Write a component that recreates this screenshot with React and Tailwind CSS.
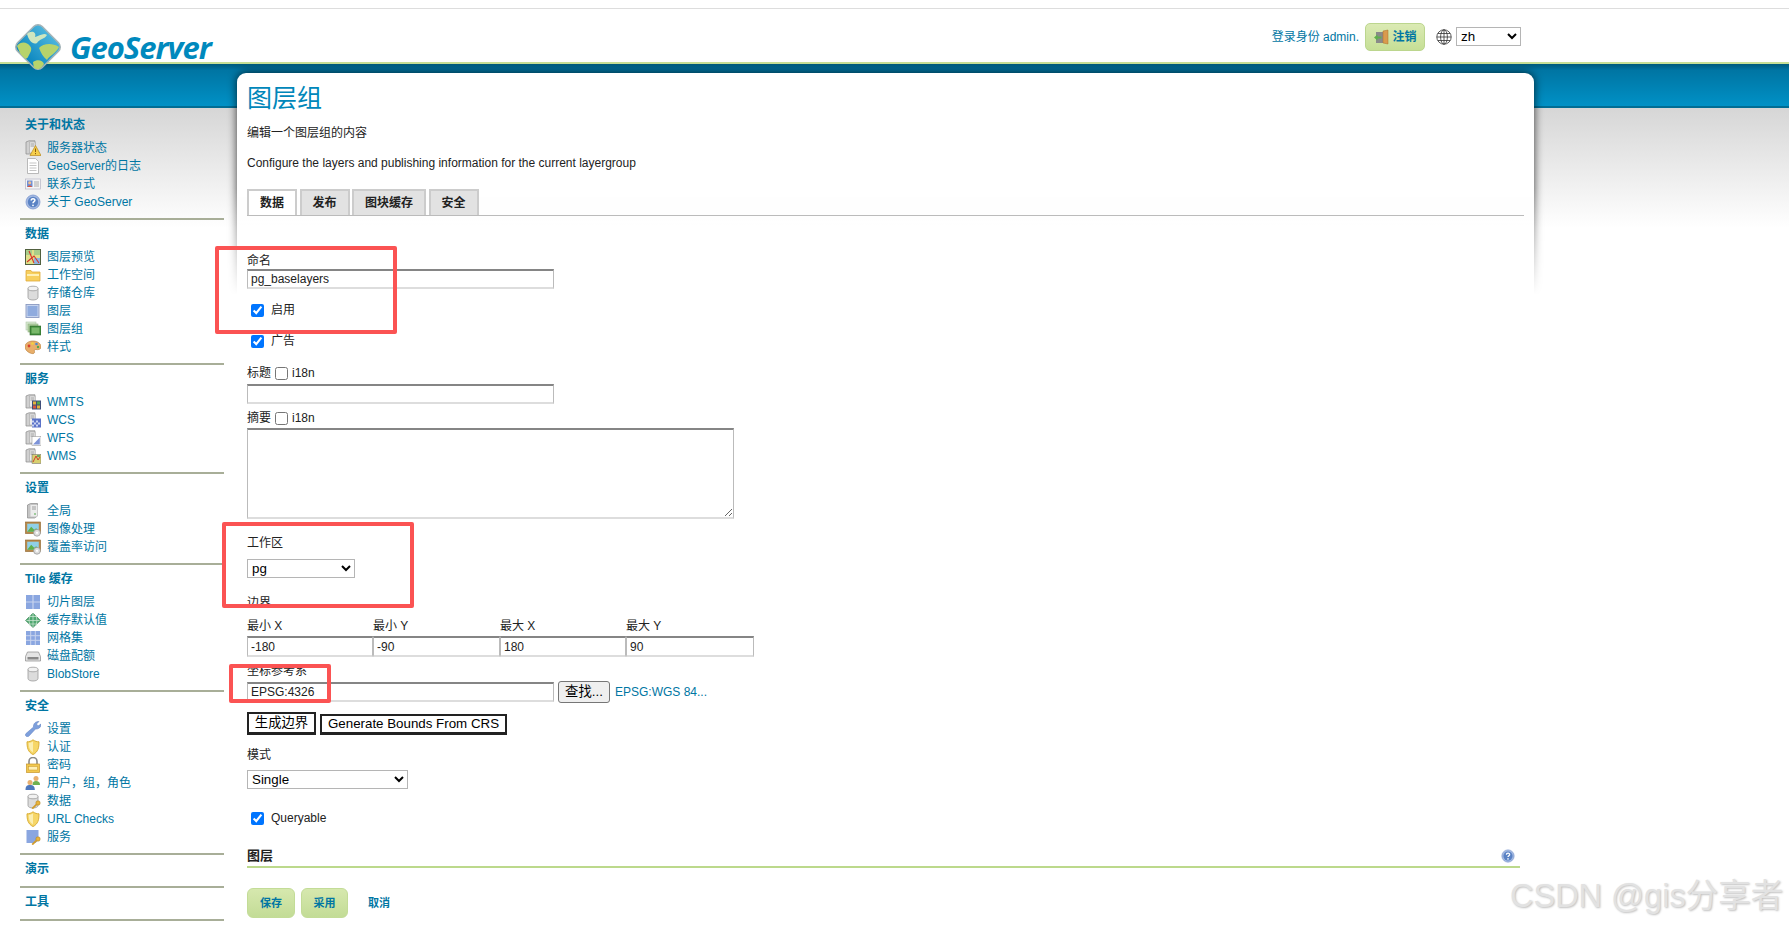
import React from 'react';

function Cyl() {
  return (
    <>
      <path d="M3 3.500v9c0 1.500 2.200 2.500 5 2.500s5-1 5-2.500v-9z" fill="#dcdcdc" stroke="#9a9a9a" strokeWidth=".8" />
      <ellipse cx="8" cy="3.500" rx="5" ry="2.300" fill="#f2f2f2" stroke="#9a9a9a" strokeWidth=".8" />
    </>
  );
}

function Server() {
  return (
    <>
      <path d="M1 2l3-1.200h6v11.200l-3 2H1z" fill="#d0d0d0" stroke="#8a8a8a" strokeWidth=".7" />
      <path d="M4.500 2h5.500v11h-5.500z" fill="#ececec" stroke="#9a9a9a" strokeWidth=".5" />
      <path d="M5.500 4h3.500M5.500 6h3.500" stroke="#888" strokeWidth=".8" />
    </>
  );
}

function Key() {
  return (
    <g>
      <circle cx="13" cy="10" r="2.200" fill="#e9b43c" stroke="#a87a18" strokeWidth=".5" />
      <path d="M11.800 11.200l-4.600 4.400" stroke="#d19c2c" strokeWidth="1.800" />
    </g>
  );
}

function Picture() {
  return (
    <>
      <rect x=".5" y="1" width="15" height="11.500" fill="#b8894a" stroke="#8a6228" strokeWidth=".6" />
      <rect x="2.200" y="2.700" width="11.600" height="8" fill="#8fd0e8" />
      <path d="M2.200 10.700l4-5 3 3 2-1.400 2.600 3.400z" fill="#5fb04c" />
      <circle cx="12" cy="11.800" r="3.400" fill="#dedede" stroke="#999" strokeWidth=".8" />
      <circle cx="12" cy="11.800" r="1.100" fill="#fff" />
    </>
  );
}

const shield = (
  <>
    <path d="M8 .8c2 1.500 4 2 6 2 0 6-.8 10-6 12.800C2.800 12.800 2 8.800 2 2.800c2 0 4-.5 6-2z" fill="#f6d667" stroke="#d6a92d" strokeWidth=".9" />
    <path d="M8 2.500v11c-3.500-2.200-4.200-5.500-4.300-9.500 1.600-.1 3-.6 4.300-1.500z" fill="#fbeeb0" />
  </>
);

const help = (
  <>
    <circle cx="8" cy="8" r="7" fill="#a3b9e2" stroke="#7d98cf" strokeWidth=".8" />
    <circle cx="8" cy="8" r="5.200" fill="#5a82c4" />
    <path d="M6.200 6.500c0-2.300 3.700-2.300 3.700-.2 0 1.500-1.900 1.300-1.900 2.900" fill="none" stroke="#fff" strokeWidth="1.500" />
    <circle cx="8" cy="11.300" r=".9" fill="#fff" />
  </>
);

const icons = {
  status: (
    <>
      <Server />
      <path d="M10.500 5.500L16 15.500H5z" fill="#f6cf4b" stroke="#b98a1c" strokeWidth=".7" />
      <path d="M10.500 8.500v3.500M10.500 13v1.200" stroke="#8a5a10" strokeWidth="1" />
    </>
  ),
  log: (
    <>
      <path d="M2.500.5h8l3 3v12h-11z" fill="#fff" stroke="#aaa" strokeWidth=".8" />
      <path d="M4.500 5h7M4.500 7.500h7M4.500 10h7M4.500 12.500h7" stroke="#b5b5b5" strokeWidth=".8" />
    </>
  ),
  contact: (
    <>
      <rect x=".5" y="3" width="15" height="10" fill="#f4f4f4" stroke="#b5b5c5" strokeWidth=".7" />
      <rect x="2" y="4.500" width="5.500" height="6.500" fill="#6f8fd6" />
      <circle cx="4.700" cy="6.800" r="1.500" fill="#f0c090" />
      <path d="M2.500 11c.3-2 4-2 4.500 0z" fill="#d9553c" />
      <path d="M9 6h5M9 8h5M9 10h5" stroke="#9a9a9a" strokeWidth=".8" />
    </>
  ),
  help,
  preview: (
    <>
      <rect x=".5" y=".5" width="15" height="15" fill="#dfe08a" stroke="#51603f" />
      <path d="M1 1h6v5H1zM9 1h6v5H9z" fill="#a9cd8a" />
      <path d="M9 9h6v6H9z" fill="#8eb4e0" />
      <path d="M4 2l5 12M2 13l7-6 5 7" fill="none" stroke="#d8352a" strokeWidth="1.100" />
    </>
  ),
  folder: (
    <>
      <path d="M1 3.500h5l1 1.500h8v9H1z" fill="#f7cf5e" stroke="#dfa93a" strokeWidth=".8" />
      <path d="M2 7h12v2H2z" fill="#fff0b5" />
    </>
  ),
  cyl: <Cyl />,
  layer: (
    <>
      <rect x="1" y="1.500" width="13" height="13" fill="#c6d4ee" stroke="#8a9ac0" strokeWidth=".9" />
      <rect x="2.500" y="3" width="10" height="10" fill="#8fabde" />
    </>
  ),
  group: (
    <>
      <rect x="1" y="1" width="10" height="8" fill="#d8e8d0" stroke="#b0c8a8" strokeWidth=".6" />
      <rect x="3" y="3" width="10" height="8" fill="#b0d0a0" stroke="#90b080" strokeWidth=".6" />
      <rect x="5" y="5" width="11" height="9" fill="#3f8a3a" stroke="#2f6a2c" strokeWidth=".6" />
      <rect x="6.500" y="6.500" width="8" height="6" fill="#79b86a" />
    </>
  ),
  style: (
    <>
      <path d="M8 2c4.500 0 8 2.500 8 6 0 2.500-3 3-5 2.500-1.500-.3-2 .8-1.500 2 .5 1.600-1 2.500-3 2C3 13.500 0 11 0 7.500 0 4.500 3.500 2 8 2z" fill="#e8ae6a" stroke="#b57b35" strokeWidth=".6" />
      <circle cx="4" cy="7" r="1.400" fill="#d8402e" />
      <circle cx="7.500" cy="4.500" r="1.300" fill="#f2d33c" />
      <circle cx="11.500" cy="5" r="1.300" fill="#4f8ad0" />
      <circle cx="13" cy="8" r="1.200" fill="#4fa84a" />
    </>
  ),
  wmts: (
    <>
      <Server />
      <rect x="7" y="6.500" width="9" height="9" fill="#3f4f7a" />
      <path d="M8 7.500h3v3H8z" fill="#e2b23c" />
      <path d="M12 7.500h3v3h-3z" fill="#4fa84a" />
      <path d="M8 11.500h3v3H8z" fill="#d8553c" />
      <path d="M12 11.500h3v3h-3z" fill="#e2b23c" />
    </>
  ),
  wcs: (
    <>
      <Server />
      <rect x="7" y="6.500" width="9" height="9" fill="#5b72c8" />
      <path d="M7 8.500h2v2H7zM11 8.500h2v2h-2zM9 10.500h2v2H9zM13 10.500h2v2h-2zM7 12.500h2v2H7zM11 12.500h2v2h-2z" fill="#c9d4f2" />
    </>
  ),
  wfs: (
    <>
      <Server />
      <rect x="7" y="6.500" width="9" height="9" fill="#fff" stroke="#888" strokeWidth=".5" />
      <path d="M14.800 7.500v7H8z" fill="#7d93d8" />
    </>
  ),
  wms: (
    <>
      <Server />
      <rect x="7" y="6.500" width="9" height="9" fill="#d8d070" stroke="#666" strokeWidth=".5" />
      <path d="M8 14l3-6 2 4 2-3" fill="none" stroke="#c8402e" strokeWidth="1" />
      <path d="M12 7h3v2h-3z" fill="#6fa85c" />
    </>
  ),
  global: (
    <>
      <path d="M2.500 2l3-1.500h7V13l-3 2h-7z" fill="#c4c4c4" stroke="#8a8a8a" strokeWidth=".7" />
      <path d="M5.500 2h7v11.500h-7z" fill="#ececec" />
      <path d="M7 4h4M7 6h4" stroke="#8a8a8a" strokeWidth=".8" />
      <path d="M9 11h2" stroke="#4fa84a" strokeWidth="1.200" />
    </>
  ),
  picture: <Picture />,
  tiles: (
    <>
      <rect x="1" y="1" width="14" height="14" fill="#8aa6e0" />
      <path d="M8 1v14M1 8h14" stroke="#c8d4ee" strokeWidth="1.200" />
    </>
  ),
  caching: (
    <>
      <path d="M8 1l7.500 7.500L8 15.500.5 8.500z" fill="#4fa870" stroke="#3a7f52" strokeWidth=".6" />
      <path d="M4 4.500h8M1.500 8.500h13M4 12h8M8 1v14.500M5 3l-1 5.500L5 14M11 3l1 5.500-1 5.500" fill="none" stroke="#d4ead8" strokeWidth=".7" />
    </>
  ),
  gridset: (
    <>
      <rect x="1" y="1" width="14" height="14" fill="#8aa6e0" />
      <path d="M5.700 1v14M10.300 1v14M1 5.700h14M1 10.300h14" stroke="#c8d4ee" strokeWidth="1" />
    </>
  ),
  disk: (
    <>
      <path d="M2.500 4h11l2 4.500v4.500h-15V8.500z" fill="#e4e4e4" stroke="#8a8a8a" strokeWidth=".7" />
      <rect x="2.500" y="9" width="11" height="2.500" fill="#888" />
    </>
  ),
  wrench: (
    <path d="M1.500 15.500c-1.500-1-1.500-2-.5-3L8.500 6c-.5-3 2-5.800 5.500-5.500L11.500 3l1.500 2 3-2c.3 3-2.500 5.500-5.500 5L4 15c-.8.800-1.500 1-2.500.5z" fill="#7d9fdc" stroke="#5f7fbe" strokeWidth=".5" />
  ),
  shield,
  lock: (
    <>
      <path d="M4 7V4.500a4 4 0 0 1 8 0V7" fill="none" stroke="#8a8a8a" strokeWidth="1.600" />
      <rect x="1.500" y="7" width="13" height="8.500" fill="#f2c84e" stroke="#c6942a" strokeWidth=".7" />
      <rect x="3.500" y="9.500" width="9" height="3.500" fill="#fff0b5" stroke="#c6942a" strokeWidth=".5" />
    </>
  ),
  users: (
    <>
      <circle cx="11" cy="3.500" r="2.500" fill="#e8b070" />
      <path d="M7.500 10c0-3 1-4 3.500-4s4 1 4 4z" fill="#6fb050" />
      <circle cx="5" cy="7.500" r="2.500" fill="#e8b070" />
      <path d="M.5 15c0-3.800 1.500-5 4.500-5s4.800 1.200 4.800 5z" fill="#4f78bd" />
    </>
  ),
  dataKey: (
    <>
      <Cyl />
      <Key />
    </>
  ),
  serviceKey: (
    <>
      <path d="M1.500 1h12v10l-3 3h-9z" fill="#8aa6e0" />
      <Key />
    </>
  ),
};

const sections = [
  {
    title: '关于和状态',
    items: [['status', '服务器状态'], ['log', 'GeoServer的日志'], ['contact', '联系方式'], ['help', '关于 GeoServer']],
  },
  {
    title: '数据',
    items: [['preview', '图层预览'], ['folder', '工作空间'], ['cyl', '存储仓库'], ['layer', '图层'], ['group', '图层组'], ['style', '样式']],
  },
  {
    title: '服务',
    items: [['wmts', 'WMTS'], ['wcs', 'WCS'], ['wfs', 'WFS'], ['wms', 'WMS']],
  },
  {
    title: '设置',
    items: [['global', '全局'], ['picture', '图像处理'], ['picture', '覆盖率访问']],
  },
  {
    title: 'Tile 缓存',
    items: [['tiles', '切片图层'], ['caching', '缓存默认值'], ['gridset', '网格集'], ['disk', '磁盘配额'], ['cyl', 'BlobStore']],
  },
  {
    title: '安全',
    items: [['wrench', '设置'], ['shield', '认证'], ['lock', '密码'], ['users', '用户，组，角色'], ['dataKey', '数据'], ['shield', 'URL Checks'], ['serviceKey', '服务']],
  },
  { title: '演示', items: [] },
  { title: '工具', items: [] },
];

const tabs = [
  { label: '数据', width: 'w-[50px]', active: true },
  { label: '发布', width: 'w-[50px]' },
  { label: '图块缓存', width: 'w-[74px]' },
  { label: '安全', width: 'w-[50px]' },
];

const bounds = [
  ['最小 X', '-180', 'w-[126px]'],
  ['最小 Y', '-90', 'w-[127px]'],
  ['最大 X', '180', 'w-[126px]'],
  ['最大 Y', '90', 'w-[128px]'],
];

const inputClass =
  'px-[3px] text-[12px] text-[#222] border border-t-2 border-b-2 border-t-[#858585] border-x-[#bbb] border-b-[#ddd] outline-none';

function Icon({ name }) {
  return (
    <svg viewBox="0 0 16 16" className="w-[16px] h-[16px] shrink-0">
      {icons[name]}
    </svg>
  );
}

function Section({ title, items }) {
  return (
    <div className={`pt-[5px] border-b-2 border-[#a8ae98] ${items.length ? 'pb-[7px]' : 'pb-[8px]'}`}>
      <div className={`h-[18px] pl-[5px] leading-[19px] font-bold text-[12px] text-[#0076a3] ${items.length ? 'mb-[5px]' : ''}`}>
        {title}
      </div>
      {items.map(([icon, label], i) => (
        <div key={i} className="h-[18px] pl-[5px] flex items-center gap-[6px] text-[12px] text-[#0076a3]">
          <Icon name={icon} />
          <span>{label}</span>
        </div>
      ))}
    </div>
  );
}

function Logo() {
  return (
    <div className="absolute left-[13px] top-[22px] z-10 flex items-start">
      <svg viewBox="0 0 50 50" className="w-[50px] h-[50px]">
        <defs>
          <clipPath id="globe">
            <rect x="7.500" y="7.500" width="35" height="35" rx="6" transform="rotate(45 25 25)" />
          </clipPath>
          <linearGradient id="sea" x1="0" y1="0" x2="0" y2="1">
            <stop offset="0" stopColor="#4cb4dc" />
            <stop offset="1" stopColor="#0a86bf" />
          </linearGradient>
        </defs>
        <rect x="7.500" y="7.500" width="35" height="35" rx="6" transform="rotate(45 25 25)" fill="url(#sea)" stroke="#a5b4b8" strokeWidth="1.500" />
        <g clipPath="url(#globe)" fill="#b7d36b">
          <path d="M14 12C18 8 24 10 22 15c4-1 9-5 12-2-2 4-8 4-10 8-4 2-8-2-10-9z" fill="#cfe6bf" />
          <path d="M4 24c4-5 10-4 13 0 3 3 0 7-2 11-2 4-6 0-8-4z" />
          <path d="M26 26c4-4 12-6 20-1-4 7-10 9-12 13-4-3-6-7-8-12z" />
          <path d="M20 40c4-3 10-2 11 2-3 5-7 7-10 5z" />
        </g>
      </svg>
      <span className="ml-[7px] mt-[7px] text-[31px] leading-[36px] italic font-bold text-[#0089bd] tracking-[-1px] [font-family:'Open_Sans',sans-serif]">
        GeoServer
      </span>
    </div>
  );
}

export default function App() {
  return (
    <div className="relative w-[1789px] h-[926px] overflow-hidden bg-white [font-family:'Liberation_Sans','Noto_Sans_CJK_SC',sans-serif]">
      <Logo />

      <header className="h-[64px] pt-[8px] border-b-2 border-[#c7df96]">
        <div className="h-[55px] border-t border-[#ddd] flex items-start justify-end pr-[268px] pt-[14px]">
          <span className="mt-[5px] text-[12px] leading-[18px] text-[#0076a3]">登录身份 admin.</span>
          <button className="ml-[6px] w-[60px] h-[28px] flex items-center justify-center gap-[3px] rounded-[5px] border border-[#bcd68e] bg-[linear-gradient(#dbeab4,#c6df96)] text-[12px] font-bold text-[#0076a3]">
            <svg viewBox="0 0 16 16" className="w-[16px] h-[16px]">
              <path d="M3 3h8v11H3z" fill="#8a8a8a" />
              <path d="M10 2l5-1v14l-5-1z" fill="#d99a4e" stroke="#a8702a" strokeWidth=".5" />
              <path d="M1 8.500l3.500-3v2h4v2h-4v2z" fill="#5fb04c" />
            </svg>
            注销
          </button>
          <svg viewBox="0 0 16 16" className="ml-[11px] mt-[6px] w-[16px] h-[16px]" fill="none" stroke="#333" strokeWidth=".8">
            <circle cx="8" cy="8" r="7.200" />
            <ellipse cx="8" cy="8" rx="3.400" ry="7.200" />
            <path d="M8 .8v14.400M.8 8h14.400M1.800 4.500h12.400M1.800 11.500h12.400" />
          </svg>
          <select defaultValue="zh" className="ml-[4px] mt-[4px] w-[65px] h-[19px] border border-[#b5b5b5] text-[13.33px] text-black bg-white">
            <option value="zh">zh</option>
          </select>
        </div>
      </header>

      <div className="h-[44px] border-b-2 border-[#006d94] bg-[linear-gradient(#005a7c,#0075a3_15%,#0091c6)]" />

      <div className="flex items-start bg-[linear-gradient(#d6d6d6,#ffffff)] bg-no-repeat bg-[size:100%_120px]">
        <aside className="w-[237px] shrink-0 pl-[20px] pr-[13px] pt-[3px]">
          {sections.map((section) => (
            <Section key={section.title} title={section.title} items={section.items} />
          ))}
        </aside>

        <main className="relative w-[1297px] -mt-[35px] pl-[10px] pb-[10px] text-[12px] leading-[16px] text-[#222]">
          <div className="absolute -left-[16px] -right-[16px] -top-[16px] h-[238px] overflow-hidden [mask-image:linear-gradient(#000_55%,transparent)]">
            <div className="absolute left-[16px] right-[16px] top-[16px] -bottom-[30px] rounded-t-[9px] bg-white shadow-[0_0_10px_rgba(0,0,0,0.75)]" />
          </div>

          <div className="relative">
            <h1 className="pt-[10px] text-[25px] leading-[30px] font-normal text-[#0087ba]">图层组</h1>
            <p className="mt-[11px] leading-[18px]">编辑一个图层组的内容</p>
            <p className="mt-[12px] leading-[18px]">Configure the layers and publishing information for the current layergroup</p>

            <div className="mt-[17px] w-[1277px] flex gap-[2.500px] border-b border-[#bbb]">
              {tabs.map((tab) => (
                <div
                  key={tab.label}
                  className={`${tab.width} h-[26px] flex items-center justify-center font-bold border-2 border-b-0 ${
                    tab.active ? 'bg-white border-[#ccc]' : 'bg-[#e2e2e2] border-[#ccc]'
                  }`}
                >
                  {tab.label}
                </div>
              ))}
            </div>

            <label className="block mt-[37px]">命名</label>
            <input readOnly value="pg_baselayers" className={`${inputClass} block w-[307px] h-[20px]`} />

            <label className="mt-[13px] h-[16px] pl-[4px] flex items-center gap-[7px]">
              <input type="checkbox" defaultChecked />
              启用
            </label>
            <label className="mt-[15px] h-[16px] pl-[4px] flex items-center gap-[7px]">
              <input type="checkbox" defaultChecked />
              广告
            </label>

            <div className="mt-[16px] h-[16px] flex items-center gap-[4px]">
              标题 <input type="checkbox" /> i18n
            </div>
            <input readOnly className={`${inputClass} block mt-[3px] w-[307px] h-[20px]`} />

            <div className="mt-[6px] h-[16px] flex items-center gap-[4px]">
              摘要 <input type="checkbox" /> i18n
            </div>
            <textarea readOnly className="block mt-[2px] w-[487px] h-[91px] border border-t-2 border-b-2 border-t-[#858585] border-x-[#bbb] border-b-[#ddd] outline-none" />

            <label className="block mt-[16px]">工作区</label>
            <select defaultValue="pg" className="block mt-[8px] w-[108px] h-[19px] border border-[#b5b5b5] text-[13.33px] text-black bg-white">
              <option value="pg">pg</option>
            </select>

            <label className="block mt-[17px]">边界</label>
            <div className="mt-[7px] flex">
              {bounds.map(([label, value, width]) => (
                <div key={label} className={width}>
                  <div>{label}</div>
                  <input readOnly value={value} className={`${inputClass} block mt-[2px] w-full h-[21px]`} />
                </div>
              ))}
            </div>

            <label className="block mt-[6px]">坐标参考系</label>
            <div className="mt-[2px] flex items-center">
              <input readOnly value="EPSG:4326" className={`${inputClass} w-[307px] h-[20px]`} />
              <button className="ml-[4px] w-[52px] h-[22px] rounded-[3px] border border-[#767676] bg-[#efefef] text-[13.33px] text-black">查找...</button>
              <span className="ml-[5px] text-[#0076a3]">EPSG:WGS 84...</span>
            </div>

            <div className="mt-[9px] flex items-end gap-[4px]">
              <button className="w-[69px] h-[23px] border-2 border-b-[3px] border-[#222] bg-white text-[13.33px] text-black">生成边界</button>
              <button className="w-[187px] h-[21px] border-2 border-b-[3px] border-[#222] bg-white text-[13.33px] leading-[14px] text-black">Generate Bounds From CRS</button>
            </div>

            <label className="block mt-[12px]">模式</label>
            <select defaultValue="Single" className="block mt-[7px] w-[161px] h-[19px] border border-[#b5b5b5] text-[13.33px] text-black bg-white">
              <option value="Single">Single</option>
            </select>

            <label className="mt-[21px] h-[16px] pl-[4px] flex items-center gap-[7px]">
              <input type="checkbox" defaultChecked />
              Queryable
            </label>

            <div className="mt-[21px] w-[1273px] pb-[1px] flex items-center justify-between border-b-2 border-[#bcd98c]">
              <h2 className="text-[13px] leading-[18px] font-bold">图层</h2>
              <svg viewBox="0 0 16 16" className="w-[14px] h-[14px] mr-[5px]">
                {help}
              </svg>
            </div>

            <div className="mt-[20px] flex items-center text-[11px] font-bold text-[#0076a3]">
              <button className="w-[48px] h-[30px] rounded-[6px] border border-[#c3dc97] bg-[linear-gradient(#d6e8ae,#c3dc96)] font-bold">保存</button>
              <button className="ml-[6px] w-[47px] h-[30px] rounded-[6px] border border-[#c3dc97] bg-[linear-gradient(#d6e8ae,#c3dc96)] font-bold">采用</button>
              <span className="ml-[20px]">取消</span>
            </div>
          </div>
        </main>
      </div>

      {/* red marks drawn over the screenshot */}
      <div className="absolute left-[215px] top-[246px] w-[182px] h-[88px] border-4 border-[#fb5353] rounded-[2px]" />
      <div className="absolute left-[222px] top-[522px] w-[192px] h-[86px] border-4 border-[#fb5353] rounded-[2px]" />
      <div className="absolute left-[229px] top-[664px] w-[102px] h-[39px] border-4 border-[#fb5353] rounded-[2px]" />

      <div className="absolute left-[1510px] top-[876px] text-[32.500px] leading-[40px] whitespace-nowrap text-[#e2e2e2] [text-shadow:1px_1px_2px_rgba(0,0,0,0.25)]">
        CSDN @gis分享者
      </div>
    </div>
  );
}
